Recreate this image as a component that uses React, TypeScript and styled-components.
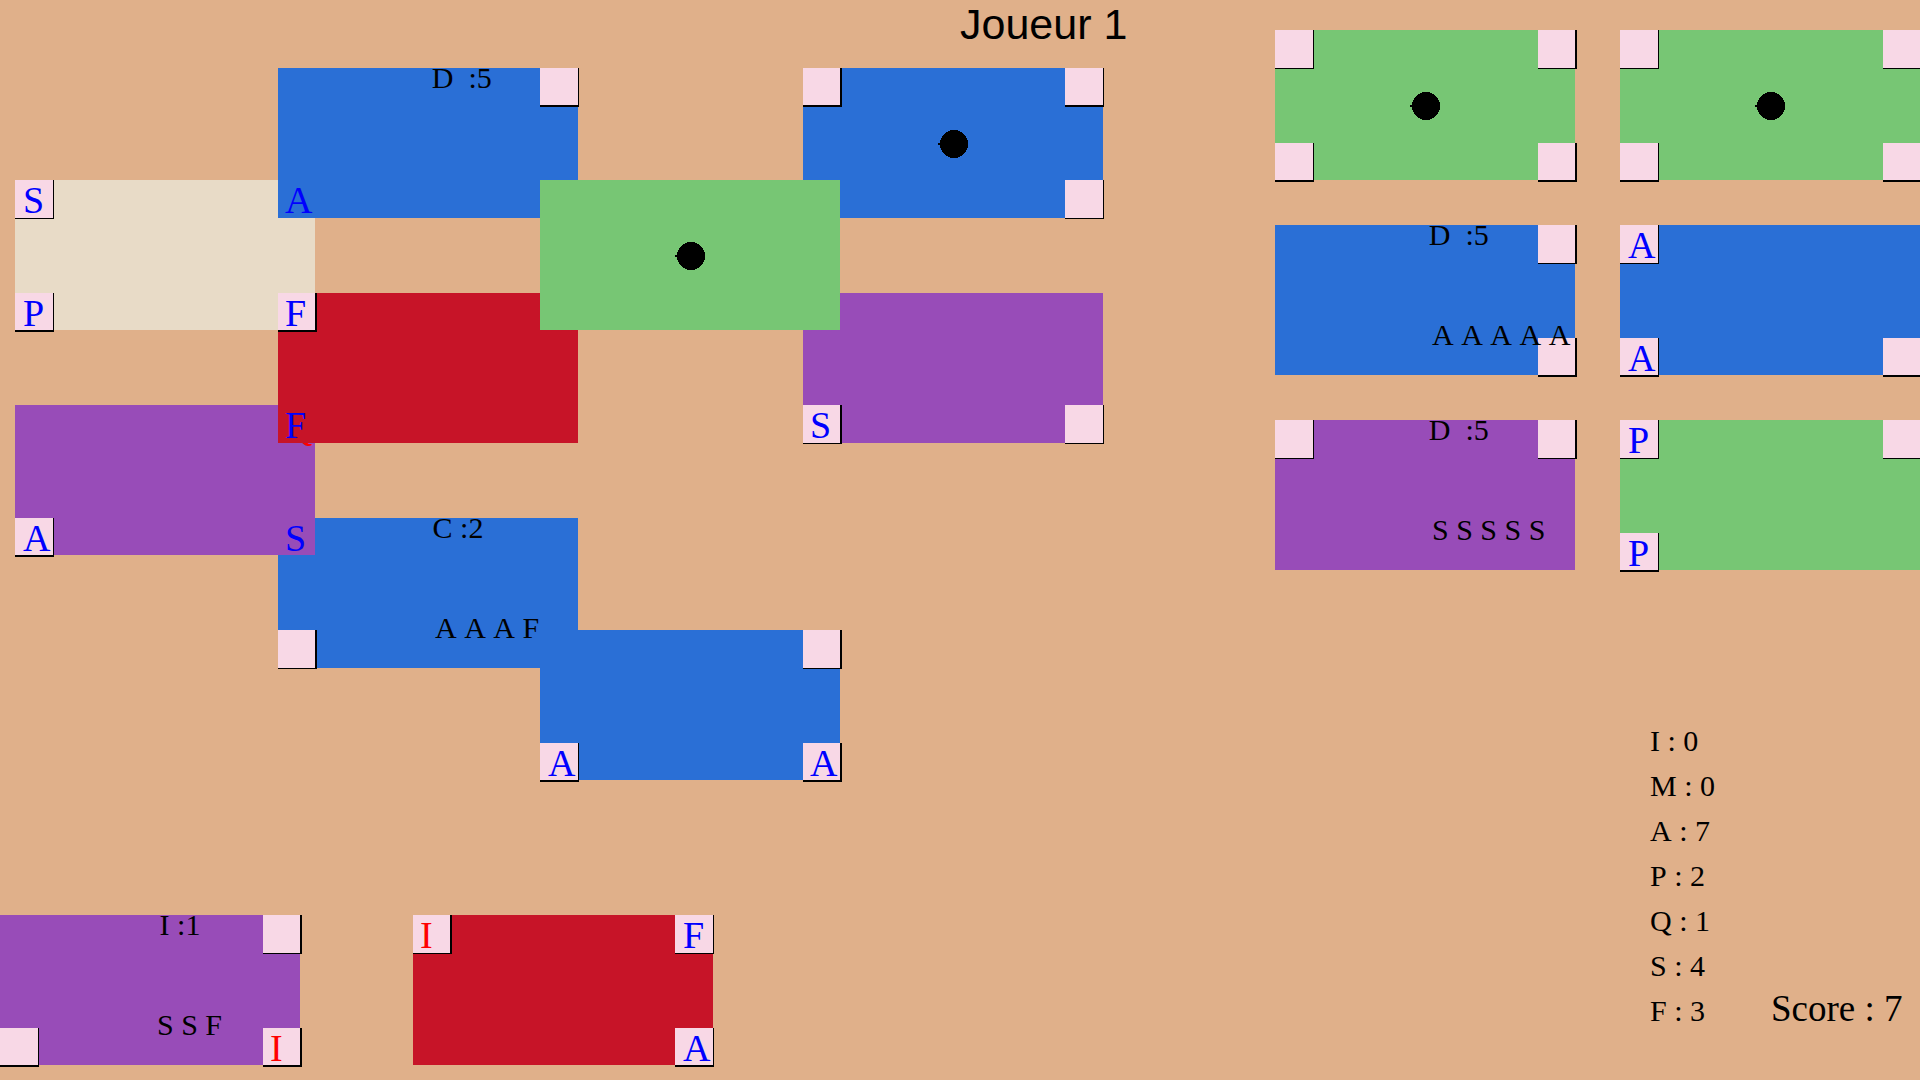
import React from "react";
import styled, { createGlobalStyle } from "styled-components";

type Suit = "blue" | "green" | "purple" | "red" | "sand";
type Place = "tl" | "tr" | "bl" | "br";

interface CornerData {
  at: Place;
  letter?: string;
  gold?: boolean;
  bare?: boolean;
  low?: boolean;
}

interface CardData {
  suit: Suit;
  corners?: CornerData[];
  gain?: string;
  cost?: string;
  dot?: boolean;
}

interface BoardCard extends CardData {
  col: number;
  row: number;
}

const suits: Record<Suit, string> = {
  blue: "#2a6fd6",
  green: "#77c674",
  purple: "#984cb8",
  red: "#c71428",
  sand: "#e8dbc7",
};

const GlobalStyle = createGlobalStyle`
  * { box-sizing: border-box; }
  body {
    margin: 0;
    background: #e0b08a;
    color: #000;
    font-family: "Liberation Serif", "Times New Roman", serif;
    font-kerning: none;
    overflow-x: clip;
  }
`;

const Page = styled.div`
  display: flex;
  min-height: 100vh;
  overflow: clip;
`;

const Table = styled.main`
  flex: 1;
  min-width: 0;
  display: flex;
  flex-direction: column;
`;

const Title = styled.h1`
  height: 68px;
  margin: 0;
  padding-left: 50vw;
  font-family: "Liberation Sans", Arial, sans-serif;
  font-weight: 400;
  font-size: 43px;
  line-height: 48px;
  white-space: nowrap;
`;

const Board = styled.section`
  display: grid;
  grid-template-columns: 263px 262px 263px 300px;
  grid-template-rows: 112px 113px 112px 113px 112px 150px;
  padding-left: 15px;
`;

const Cell = styled.div<{ $col: number; $row: number }>`
  grid-column: ${(p) => p.$col};
  grid-row: ${(p) => p.$row};
`;

const Hand = styled.section`
  display: flex;
  gap: 113px;
  margin-top: auto;
  padding-bottom: 15px;
`;

const Side = styled.aside`
  display: flex;
  flex-direction: column;
  width: 645px;
  padding: 30px 0 47px;
`;

const Reserve = styled.section`
  display: grid;
  grid-template-columns: 300px 300px;
  gap: 45px;
`;

const Totals = styled.footer`
  display: flex;
  align-items: last baseline;
  gap: 30px;
  margin-top: auto;
  padding-left: 375px;
  line-height: 45px;
`;

const Counts = styled.ul`
  width: 91px;
  margin: 0;
  padding: 0;
  list-style: none;
  font-size: 30px;
`;

const Score = styled.p`
  margin: 0;
  font-size: 37px;
  white-space: nowrap;
`;

const CardBox = styled.article<{ $suit: Suit; $oddX: boolean; $oddY: boolean }>`
  position: relative;
  display: grid;
  grid-template-columns: ${(p) => (p.$oddX ? "37px 225px 38px" : "38px 225px 37px")};
  grid-template-rows: ${(p) => (p.$oddY ? "37px 75px 38px" : "38px 75px 37px")};
  width: 300px;
  height: 150px;
  background: ${(p) => suits[p.$suit]};
`;

const CornerBox = styled.div<{
  $at: Place;
  $bare?: boolean;
  $gold?: boolean;
  $low?: boolean;
  $right: number;
  $bottom: number;
}>`
  grid-column: ${(p) => (p.$at[1] === "l" ? 1 : 3)};
  grid-row: ${(p) => (p.$at[0] === "t" ? 1 : 3)};
  width: 39px;
  height: 39px;
  padding-left: ${(p) => (p.$right === 2 ? 7 : 8)}px;
  border: 0 solid ${(p) => (p.$bare ? "transparent" : "#000")};
  border-right-width: ${(p) => p.$right}px;
  border-bottom-width: ${(p) => p.$bottom}px;
  background: ${(p) => (p.$bare ? "transparent" : "#f8d8e6")};
  color: ${(p) => (p.$gold ? "#f00" : "#00f")};
  font-size: 38px;
  line-height: ${(p) => (p.$low ? 45 : 40)}px;
`;

const Gain = styled.span`
  position: absolute;
  top: 0;
  left: 0;
  width: 360px;
  font-size: 30px;
  line-height: 20px;
  text-align: center;
  white-space: pre;
`;

const Cost = styled.span`
  position: absolute;
  top: 100px;
  left: 157px;
  font-size: 30px;
  line-height: 20px;
  white-space: nowrap;
`;

const Dot = styled.svg`
  grid-area: 1 / 1 / 4 / 4;
  place-self: center;
  width: 30px;
  height: 30px;
`;

function Card({
  card,
  oddX = false,
  oddY = false,
}: {
  card: CardData;
  oddX?: boolean;
  oddY?: boolean;
}) {
  return (
    <CardBox $suit={card.suit} $oddX={oddX} $oddY={oddY}>
      {card.corners?.map((c) => (
        <CornerBox
          key={c.at}
          $at={c.at}
          $bare={c.bare}
          $gold={c.gold}
          $low={c.low}
          $right={(c.at[1] === "l") === oddX ? 2 : 1}
          $bottom={(c.at[0] === "t") === oddY ? 2 : 1}
        >
          {c.letter}
        </CornerBox>
      ))}
      {card.dot && (
        <Dot viewBox="0 0 30 30" shapeRendering="crispEdges" aria-hidden="true">
          <circle cx="16" cy="16" r="14" />
          <rect x="0" y="15" width="3" height="2" />
        </Dot>
      )}
      {card.gain && <Gain>{card.gain}</Gain>}
      {card.cost && <Cost>{card.cost}</Cost>}
    </CardBox>
  );
}

/* Listed in the order they were played: later cards lie over earlier ones. */
const board: BoardCard[] = [
  { col: 1, row: 2, suit: "sand", corners: [{ at: "tl", letter: "S" }, { at: "bl", letter: "P" }] },
  { col: 2, row: 5, suit: "blue", gain: "C :2", cost: "A A A F", corners: [{ at: "bl" }] },
  {
    col: 1,
    row: 4,
    suit: "purple",
    corners: [
      { at: "tr", letter: "Q", gold: true, bare: true, low: true },
      { at: "bl", letter: "A" },
      { at: "br", letter: "S", bare: true },
    ],
  },
  {
    col: 2,
    row: 1,
    suit: "blue",
    gain: " D  :5",
    corners: [{ at: "tr" }, { at: "bl", letter: "A", bare: true }],
  },
  {
    col: 2,
    row: 3,
    suit: "red",
    corners: [{ at: "tl", letter: "F" }, { at: "bl", letter: "F", bare: true }],
  },
  { col: 4, row: 1, suit: "blue", dot: true, corners: [{ at: "tl" }, { at: "tr" }, { at: "br" }] },
  { col: 4, row: 3, suit: "purple", corners: [{ at: "bl", letter: "S" }, { at: "br" }] },
  { col: 3, row: 2, suit: "green", dot: true },
  {
    col: 3,
    row: 6,
    suit: "blue",
    corners: [{ at: "tr" }, { at: "bl", letter: "A" }, { at: "br", letter: "A" }],
  },
];

const blanks: CornerData[] = [{ at: "tl" }, { at: "tr" }, { at: "bl" }, { at: "br" }];

const reserve: CardData[] = [
  { suit: "green", dot: true, corners: blanks },
  { suit: "green", dot: true, corners: blanks },
  { suit: "blue", gain: " D  :5", cost: "A A A A A", corners: [{ at: "tr" }, { at: "br" }] },
  {
    suit: "blue",
    corners: [{ at: "tl", letter: "A" }, { at: "bl", letter: "A" }, { at: "br" }],
  },
  { suit: "purple", gain: " D  :5", cost: "S S S S S", corners: [{ at: "tl" }, { at: "tr" }] },
  {
    suit: "green",
    corners: [{ at: "tl", letter: "P" }, { at: "tr" }, { at: "bl", letter: "P" }],
  },
];

const hand: CardData[] = [
  {
    suit: "purple",
    gain: "I :1",
    cost: "S S F",
    corners: [{ at: "tr" }, { at: "bl" }, { at: "br", letter: "I", gold: true }],
  },
  {
    suit: "red",
    corners: [
      { at: "tl", letter: "I", gold: true },
      { at: "tr", letter: "F" },
      { at: "br", letter: "A" },
    ],
  },
];

const counts: [string, number][] = [
  ["I", 0],
  ["M", 0],
  ["A", 7],
  ["P", 2],
  ["Q", 1],
  ["S", 4],
  ["F", 3],
];

export default function App() {
  return (
    <>
      <GlobalStyle />
      <Page>
        <Table>
          <Title>Joueur 1</Title>
          <Board>
            {board.map((c) => (
              <Cell key={`${c.col}-${c.row}`} $col={c.col} $row={c.row}>
                <Card card={c} oddX={c.col % 2 === 0} oddY={c.row % 2 === 1} />
              </Cell>
            ))}
          </Board>
          <Hand>
            {hand.map((c, i) => (
              <Card key={i} card={c} oddX={i % 2 === 1} />
            ))}
          </Hand>
        </Table>
        <Side>
          <Reserve>
            {reserve.map((c, i) => (
              <Card key={i} card={c} />
            ))}
          </Reserve>
          <Totals>
            <Counts>
              {counts.map(([name, n]) => (
                <li key={name}>{`${name} : ${n}`}</li>
              ))}
            </Counts>
            <Score>Score : 7</Score>
          </Totals>
        </Side>
      </Page>
    </>
  );
}
